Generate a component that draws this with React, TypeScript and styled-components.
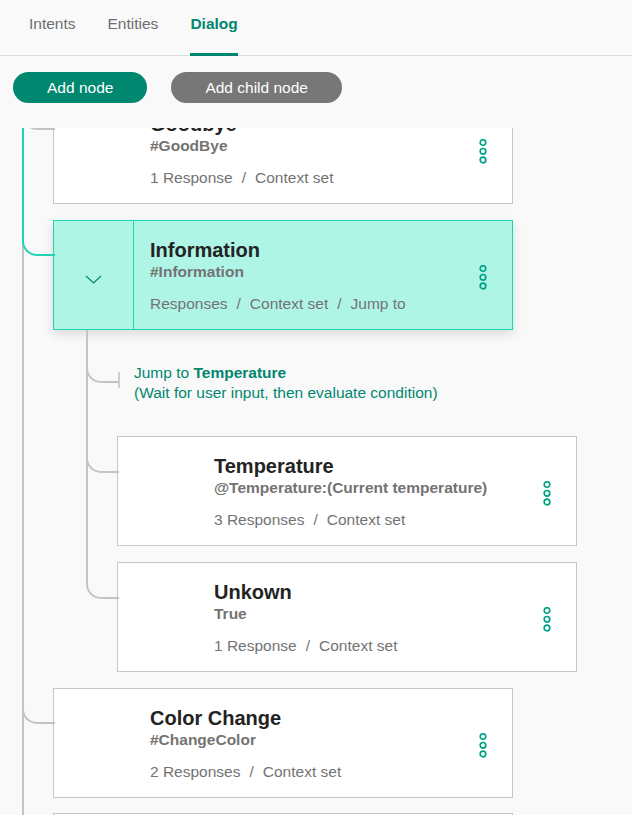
import styled, { createGlobalStyle, css } from "styled-components";

// ── Theme values ──────────────────────────────────────────────────────────────

const teal = "#00876f";
const tealBright = "#1fd3b5";
const lineGray = "#c4c4c4";
const textGray = "#737373";

const GlobalStyle = createGlobalStyle`
  html, body {
    margin: 0;
    padding: 0;
    background: #f9f9f9;
  }
  body {
    font-family: "Liberation Sans", Arial, Helvetica, sans-serif;
    color: #222;
  }
  * {
    box-sizing: border-box;
  }
`;

// ── Layout ────────────────────────────────────────────────────────────────────

const Page = styled.div`
  width: 632px;
  height: 815px;
  display: flex;
  flex-direction: column;
  overflow: hidden;
  background: #f9f9f9;
`;

const Tabs = styled.nav`
  display: flex;
  gap: 32px;
  height: 56px;
  padding-left: 29px;
  border-bottom: 1px solid #dcdcdc;
`;

const Tab = styled.a<{ $active?: boolean }>`
  position: relative;
  padding-top: 14px;
  font-size: 15.5px;
  line-height: 20px;
  color: ${({ $active }) => ($active ? teal : "#6e6e6e")};
  font-weight: ${({ $active }) => ($active ? 700 : 400)};
  cursor: pointer;

  ${({ $active }) =>
    $active &&
    css`
      &::after {
        content: "";
        position: absolute;
        left: 0;
        right: 0;
        bottom: -1px;
        height: 3px;
        background: ${teal};
      }
    `}
`;

const Toolbar = styled.div`
  display: flex;
  gap: 24px;
  padding: 16px 13px 0;
`;

const PillButton = styled.button<{ $variant?: "primary" | "muted" }>`
  height: 31px;
  padding: 0 34px;
  border: none;
  border-radius: 16px;
  font-family: inherit;
  font-size: 15.5px;
  color: #fff;
  background: ${({ $variant }) => ($variant === "muted" ? "#777" : teal)};
  cursor: pointer;
`;

const Viewport = styled.div`
  flex: 1;
  margin-top: 25px;
  overflow: hidden;
`;

const Scroller = styled.div`
  margin-top: -34px;
`;

// ── Tree ──────────────────────────────────────────────────────────────────────

const List = styled.ul<{ $indent: number }>`
  list-style: none;
  margin: 0 0 0 ${({ $indent }) => $indent}px;
  padding: 0;
`;

const Item = styled.li<{
  $gap: number;
  $joint: number;
  $last?: boolean;
  $lit?: boolean;
  $litBelow?: boolean;
}>`
  position: relative;
  margin-top: ${({ $gap }) => $gap}px;
  padding-left: 31px;

  &::before {
    content: "";
    position: absolute;
    z-index: 1;
    left: 0;
    top: ${({ $gap }) => -$gap}px;
    width: 31px;
    height: ${({ $gap, $joint }) => $gap + $joint}px;
    border-left: 2px solid ${({ $lit }) => ($lit ? tealBright : lineGray)};
    border-bottom: 2px solid ${({ $lit }) => ($lit ? tealBright : lineGray)};
    border-bottom-left-radius: 15px;
  }

  ${({ $last, $joint, $litBelow }) =>
    !$last &&
    css`
      &::after {
        content: "";
        position: absolute;
        left: 0;
        top: ${$joint - 16}px;
        bottom: 0;
        border-left: 2px solid ${$litBelow ? tealBright : lineGray};
      }
    `}
`;

const Card = styled.div<{ $selected?: boolean }>`
  display: flex;
  width: 460px;
  height: 110px;
  background: #fff;
  border: 1px solid #c6c6c6;

  ${({ $selected }) =>
    $selected &&
    css`
      background: #aef5e6;
      border-color: ${tealBright};
      box-shadow: 0 4px 10px rgba(0, 0, 0, 0.12);
    `}
`;

const Toggle = styled.div<{ $selected?: boolean }>`
  flex: none;
  width: 80px;
  display: flex;
  align-items: center;
  justify-content: center;
  padding-top: 8px;
  border-right: 1px solid ${({ $selected }) => ($selected ? tealBright : "transparent")};
`;

const Body = styled.div`
  flex: 1;
  padding: 17px 0 0 16px;
`;

const Title = styled.div`
  font-size: 20px;
  line-height: 24px;
  font-weight: 700;
  color: #232323;
`;

const Condition = styled.div`
  font-size: 15.5px;
  line-height: 20px;
  font-weight: 700;
  color: ${textGray};
`;

const Meta = styled.div`
  display: flex;
  margin-top: 12px;
  font-size: 15.5px;
  line-height: 20px;
  color: ${textGray};
`;

const Sep = styled.span`
  margin: 0 9px;
`;

const MenuButton = styled.button`
  flex: none;
  width: 59px;
  display: flex;
  align-items: center;
  justify-content: center;
  padding: 5px 0 0;
  background: none;
  border: none;
  cursor: pointer;
`;

const JumpRow = styled.div`
  display: flex;
  align-items: flex-start;
  padding-top: 33px;
`;

const Tick = styled.span`
  flex: none;
  width: 2px;
  height: 16px;
  margin: 9px 14px 0 1px;
  background: #cfcfcf;
`;

const JumpText = styled.div`
  font-size: 15.5px;
  line-height: 20px;
  color: ${teal};

  strong {
    font-weight: 700;
  }
`;

// ── Icons ─────────────────────────────────────────────────────────────────────

function Dots() {
  return (
    <svg width="10" height="25" viewBox="0 0 10 25" fill="none">
      {[3.5, 12.3, 21].map((cy) => (
        <circle key={cy} cx="5" cy={cy} r="2.8" stroke="#00a187" strokeWidth="1.7" />
      ))}
    </svg>
  );
}

function Chevron() {
  return (
    <svg width="17" height="9" viewBox="0 0 17 9" fill="none">
      <polyline points="1,1 8.5,8 16,1" stroke={teal} strokeWidth="1.1" />
    </svg>
  );
}

// ── Node card ─────────────────────────────────────────────────────────────────

type NodeInfo = {
  title: string;
  condition: string;
  meta: string[];
};

function NodeCard({ node, selected }: { node: NodeInfo; selected?: boolean }) {
  return (
    <Card $selected={selected}>
      <Toggle $selected={selected}>{selected && <Chevron />}</Toggle>
      <Body>
        <Title>{node.title}</Title>
        <Condition>{node.condition}</Condition>
        <Meta>
          {node.meta.map((m, i) => (
            <span key={m}>
              {i > 0 && <Sep>/</Sep>}
              {m}
            </span>
          ))}
        </Meta>
      </Body>
      <MenuButton aria-label="Node options">
        <Dots />
      </MenuButton>
    </Card>
  );
}

const goodbye: NodeInfo = {
  title: "Goodbye",
  condition: "#GoodBye",
  meta: ["1 Response", "Context set"],
};

const information: NodeInfo = {
  title: "Information",
  condition: "#Information",
  meta: ["Responses", "Context set", "Jump to"],
};

const temperature: NodeInfo = {
  title: "Temperature",
  condition: "@Temperature:(Current temperature)",
  meta: ["3 Responses", "Context set"],
};

const unknown: NodeInfo = {
  title: "Unkown",
  condition: "True",
  meta: ["1 Response", "Context set"],
};

const colorChange: NodeInfo = {
  title: "Color Change",
  condition: "#ChangeColor",
  meta: ["2 Responses", "Context set"],
};

const anythingElse: NodeInfo = {
  title: "Anything else",
  condition: "anything_else",
  meta: ["1 Response"],
};

// ── App ───────────────────────────────────────────────────────────────────────

export default function App() {
  return (
    <>
      <GlobalStyle />
      <Page>
        <Tabs>
          <Tab>Intents</Tab>
          <Tab>Entities</Tab>
          <Tab $active>Dialog</Tab>
        </Tabs>

        <Toolbar>
          <PillButton>Add node</PillButton>
          <PillButton $variant="muted">Add child node</PillButton>
        </Toolbar>

        <Viewport>
          <Scroller>
            <List $indent={22}>
              <Item $gap={0} $joint={34} $litBelow>
                <NodeCard node={goodbye} />
              </Item>

              <Item $gap={16} $joint={34} $lit>
                <NodeCard node={information} selected />
                <List $indent={33}>
                  <Item $gap={0} $joint={51}>
                    <JumpRow>
                      <Tick />
                      <JumpText>
                        Jump to <strong>Temperature</strong>
                        <br />
                        (Wait for user input, then evaluate condition)
                      </JumpText>
                    </JumpRow>
                  </Item>
                  <Item $gap={33} $joint={35}>
                    <NodeCard node={temperature} />
                  </Item>
                  <Item $gap={16} $joint={35} $last>
                    <NodeCard node={unknown} />
                  </Item>
                </List>
              </Item>

              <Item $gap={16} $joint={34}>
                <NodeCard node={colorChange} />
              </Item>

              <Item $gap={15} $joint={34}>
                <NodeCard node={anythingElse} />
              </Item>
            </List>
          </Scroller>
        </Viewport>
      </Page>
    </>
  );
}
